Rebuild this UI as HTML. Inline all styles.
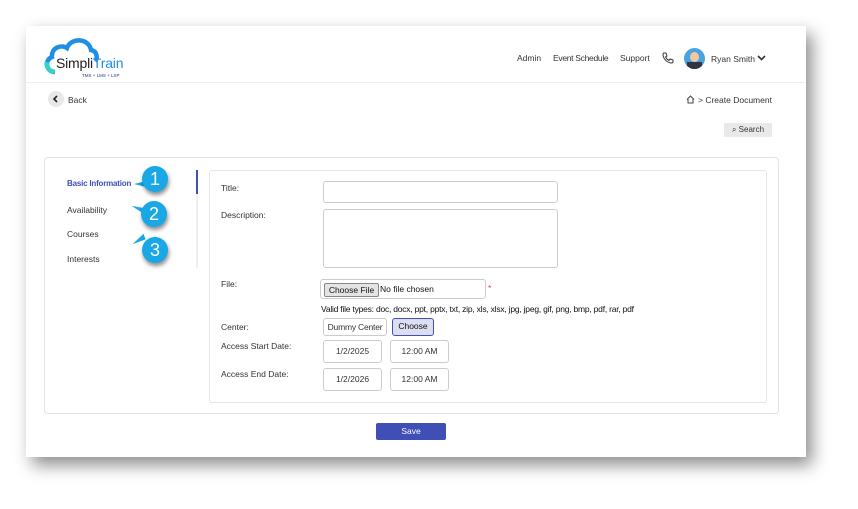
<!DOCTYPE html>
<html><head><style>
body{margin:0;width:858px;height:509px;background:#fff;font-family:"Liberation Sans",sans-serif;position:relative;overflow:hidden}
.a{position:absolute}
.card{left:26px;top:26px;width:780px;height:431px;background:#fff;box-shadow:6px 8px 16px rgba(0,0,0,.45)}
.t{font-size:8.5px;color:#333;position:absolute;white-space:nowrap}
.inp{position:absolute;border:1px solid #ccc;border-radius:3px;background:#fff;font-size:8.5px;color:#333;box-sizing:border-box}
.badge{position:absolute;width:26px;height:26px;border-radius:50%;background:#19a7e6;color:#fff;font-size:18px;text-align:center;line-height:26px;box-shadow:1px 3px 4px rgba(0,0,0,.45)}
.tail{position:absolute;width:0;height:0}
</style></head><body>
<div class="a card"></div>
<!-- logo -->
<svg class="a" style="left:43px;top:36px" width="56" height="40" viewBox="0 0 56 40"><path d="M12 36 C3 36 1 24 9 21 C8 12 18 8 24 12 C28 1 46 2 48 14 C54 15 55 22 52 25" fill="none" stroke="#1e8fe6" stroke-width="4.5"/><path d="M12 36 C5 35 3 30 4 26" fill="none" stroke="#33d1c6" stroke-width="4.5"/></svg>
<div class="t" style="left:56px;top:55px;font-size:14px;color:#222;letter-spacing:-0.2px">Simpli<span style="color:#1e8fe6">Train</span></div>
<div class="t" style="left:82px;top:73px;font-size:4.5px;color:#1e3a8a">TMS + LMS + LXP</div>
<div class="a" style="left:26px;top:82px;width:780px;height:1px;background:#eee"></div>
<div class="t" style="left:517px;top:53px">Admin</div>
<div class="t" style="left:553px;top:53px;letter-spacing:-0.3px">Event Schedule</div>
<div class="t" style="left:620px;top:53px">Support</div>
<svg class="a" style="left:662px;top:52px" width="12" height="12" viewBox="0 0 12 12"><path d="M2 1 L4 1 L5 4 L3.5 5 C4.5 7 5 7.5 7 8.5 L8 7 L11 8 L11 10 C11 11 10 11 9 11 C5 10.5 1.5 7 1 3 C1 2 1 1 2 1Z" fill="none" stroke="#333" stroke-width="1"/></svg>
<div class="a" style="left:684px;top:48px;width:21px;height:21px;border-radius:50%;background:#4aa3df;overflow:hidden"><div class="a" style="left:6px;top:4px;width:9px;height:10px;border-radius:50%;background:#f2c8a0"></div><div class="a" style="left:3px;top:14px;width:15px;height:8px;background:#334"></div></div>
<div class="t" style="left:711px;top:54px">Ryan Smith</div>
<svg class="a" style="left:757px;top:55px" width="9" height="6" viewBox="0 0 9 6"><path d="M1 1 L4.5 4.5 L8 1" fill="none" stroke="#333" stroke-width="1.6"/></svg>
<div class="a" style="left:48px;top:91px;width:16px;height:16px;border-radius:50%;background:#e8e8e8"></div>
<svg class="a" style="left:52px;top:95px" width="8" height="8" viewBox="0 0 8 8"><path d="M5 1 L2 4 L5 7" fill="none" stroke="#222" stroke-width="1.6"/></svg>
<div class="t" style="left:68px;top:95px">Back</div>
<svg class="a" style="left:686px;top:95px" width="9" height="9" viewBox="0 0 9 9"><path d="M1 4.5 L4.5 1 L8 4.5 M2 4 L2 8 L7 8 L7 4" fill="none" stroke="#444" stroke-width="1"/></svg>
<div class="t" style="left:698px;top:95px">&gt; Create Document</div>
<div class="a" style="left:724px;top:123px;width:48px;height:14px;background:#e9e9e9;border-radius:2px;font-size:8px;color:#333;line-height:14px;text-align:center">⌕ Search</div>
<div class="a" style="left:44px;top:157px;width:733px;height:255px;border:1px solid #e3e3e3;border-radius:4px"></div>
<div class="t" style="left:67px;top:179px;color:#3f51b5;font-weight:bold;font-size:8px;letter-spacing:-0.2px">Basic Information</div>
<div class="t" style="left:67px;top:205px">Availability</div>
<div class="t" style="left:67px;top:229px">Courses</div>
<div class="t" style="left:67px;top:254px">Interests</div>
<div class="a" style="left:196px;top:170px;width:2px;height:98px;background:#eee"></div>
<div class="a" style="left:196px;top:170px;width:2px;height:24px;background:#3f51b5"></div>
<div class="tail" style="left:134px;top:181px;border-top:3px solid transparent;border-bottom:3px solid transparent;border-right:12px solid #19a7e6"></div>
<div class="badge" style="left:142px;top:166px">1</div>
<div class="tail" style="left:131px;top:207px;border-top:6px solid #19a7e6;border-left:14px solid transparent;transform:rotate(10deg)"></div>
<div class="badge" style="left:141px;top:201px">2</div>
<div class="tail" style="left:131px;top:236px;border-bottom:6px solid #19a7e6;border-left:14px solid transparent;transform:rotate(-20deg)"></div>
<div class="badge" style="left:142px;top:237px">3</div>
<div class="a" style="left:209px;top:170px;width:556px;height:231px;border:1px solid #e6e6e6;border-radius:3px"></div>
<div class="t" style="left:221px;top:183px">Title:</div>
<div class="inp" style="left:323px;top:181px;width:235px;height:22px"></div>
<div class="t" style="left:221px;top:210px">Description:</div>
<div class="inp" style="left:323px;top:209px;width:235px;height:59px"></div>
<div class="t" style="left:221px;top:279px">File:</div>
<div class="inp" style="left:320px;top:279px;width:166px;height:20px"><span class="a" style="left:3px;top:3px;height:12px;width:53px;background:#e4e4e4;border:1px solid #888;border-radius:2px;font-size:8.5px;line-height:12px;text-align:center;color:#111">Choose File</span><span class="a" style="left:59px;top:4px;font-size:8.5px;color:#111">No file chosen</span></div>
<div class="t" style="left:488px;top:283px;color:#e33">*</div>
<div class="t" style="left:321px;top:304px;color:#111;font-size:8.5px;letter-spacing:-0.22px">Valid file types: doc, docx, ppt, pptx, txt, zip, xls, xlsx, jpg, jpeg, gif, png, bmp, pdf, rar, pdf</div>
<div class="t" style="left:221px;top:322px">Center:</div>
<div class="inp" style="left:323px;top:318px;width:64px;height:18px;line-height:16px;text-align:center;letter-spacing:-0.2px">Dummy Center</div>
<div class="inp" style="left:392px;top:318px;width:42px;height:18px;line-height:15px;text-align:center;background:#dcdff2;border:1.5px solid #4050b5;color:#111">Choose</div>
<div class="t" style="left:221px;top:341px">Access Start Date:</div>
<div class="inp" style="left:323px;top:340px;width:59px;height:23px;line-height:21px;text-align:center">1/2/2025</div>
<div class="inp" style="left:390px;top:340px;width:59px;height:23px;line-height:21px;text-align:center">12:00 AM</div>
<div class="t" style="left:221px;top:369px">Access End Date:</div>
<div class="inp" style="left:323px;top:368px;width:59px;height:23px;line-height:21px;text-align:center">1/2/2026</div>
<div class="inp" style="left:390px;top:368px;width:59px;height:23px;line-height:21px;text-align:center">12:00 AM</div>
<div class="a" style="left:376px;top:423px;width:70px;height:17px;background:#3f4fb5;color:#fff;font-size:8.5px;text-align:center;line-height:17px;border-radius:2px">Save</div>
</body></html>
